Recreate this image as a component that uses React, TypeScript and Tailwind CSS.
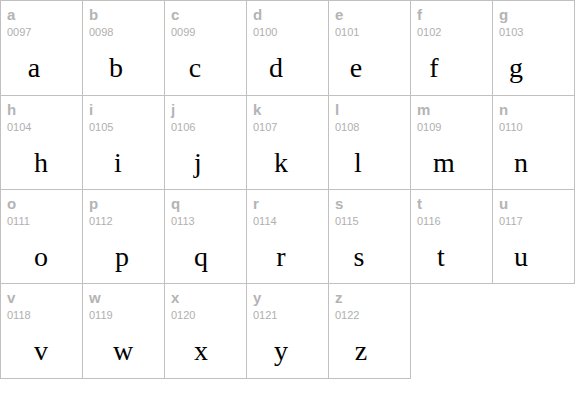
type Glyph = {
  ch: string;
  code: string;
  w: string; // width of the glyph box, sets where the preview sits in its cell
};

const glyphs: Glyph[] = [
  // row 1
  { ch: 'a', code: '0097', w: 'w-[66px]' },
  { ch: 'b', code: '0098', w: 'w-[66px]' },
  { ch: 'c', code: '0099', w: 'w-[60px]' },
  { ch: 'd', code: '0100', w: 'w-[58px]' },
  { ch: 'e', code: '0101', w: 'w-[54px]' },
  { ch: 'f', code: '0102', w: 'w-[46px]' },
  { ch: 'g', code: '0103', w: 'w-[46px]' },
  // row 2
  { ch: 'h', code: '0104', w: 'w-[80px]' },
  { ch: 'i', code: '0105', w: 'w-[70px]' },
  { ch: 'j', code: '0106', w: 'w-[66px]' },
  { ch: 'k', code: '0107', w: 'w-[68px]' },
  { ch: 'l', code: '0108', w: 'w-[58px]' },
  { ch: 'm', code: '0109', w: 'w-[66px]' },
  { ch: 'n', code: '0110', w: 'w-[56px]' },
  // row 3
  { ch: 'o', code: '0111', w: 'w-[80px]' },
  { ch: 'p', code: '0112', w: 'w-[78px]' },
  { ch: 'q', code: '0113', w: 'w-[72px]' },
  { ch: 'r', code: '0114', w: 'w-[68px]' },
  { ch: 's', code: '0115', w: 'w-[60px]' },
  { ch: 't', code: '0116', w: 'w-[60px]' },
  { ch: 'u', code: '0117', w: 'w-[56px]' },
  // row 4
  { ch: 'v', code: '0118', w: 'w-[80px]' },
  { ch: 'w', code: '0119', w: 'w-[80px]' },
  { ch: 'x', code: '0120', w: 'w-[72px]' },
  { ch: 'y', code: '0121', w: 'w-[68px]' },
  { ch: 'z', code: '0122', w: 'w-[64px]' },
];

/* =========================
   ONE CELL
========================= */
function GlyphCell({ g }: { g: Glyph }) {
  return (
    <div className="flex flex-col border-r border-b border-[#c0c0c0] pl-[6px] pt-[6px]">
      <span className="text-[15px] leading-[15px] font-bold text-[#b4b4b4] font-['Liberation_Sans',Arial,sans-serif]">
        {g.ch}
      </span>
      <span className="mt-[4px] text-[11px] leading-[13px] text-[#b0b0b0] font-['Liberation_Sans',Arial,sans-serif]">
        {g.code}
      </span>
      <span
        className={`${g.w} -ml-[6px] mt-[15px] text-center text-[28px] leading-[28px] text-black font-['Liberation_Serif','Times_New_Roman',serif]`}
      >
        {g.ch}
      </span>
    </div>
  );
}

/* =========================
   CHARACTER MAP
========================= */
export default function App() {
  return (
    <div className="min-h-screen w-[575px] bg-white">
      <div className="grid grid-cols-[repeat(7,82px)] grid-rows-[95px_94px_94px_95px] border-t border-l border-[#c0c0c0] w-[575px]">
        {glyphs.map((g) => (
          <GlyphCell key={g.code} g={g} />
        ))}
      </div>
    </div>
  );
}
